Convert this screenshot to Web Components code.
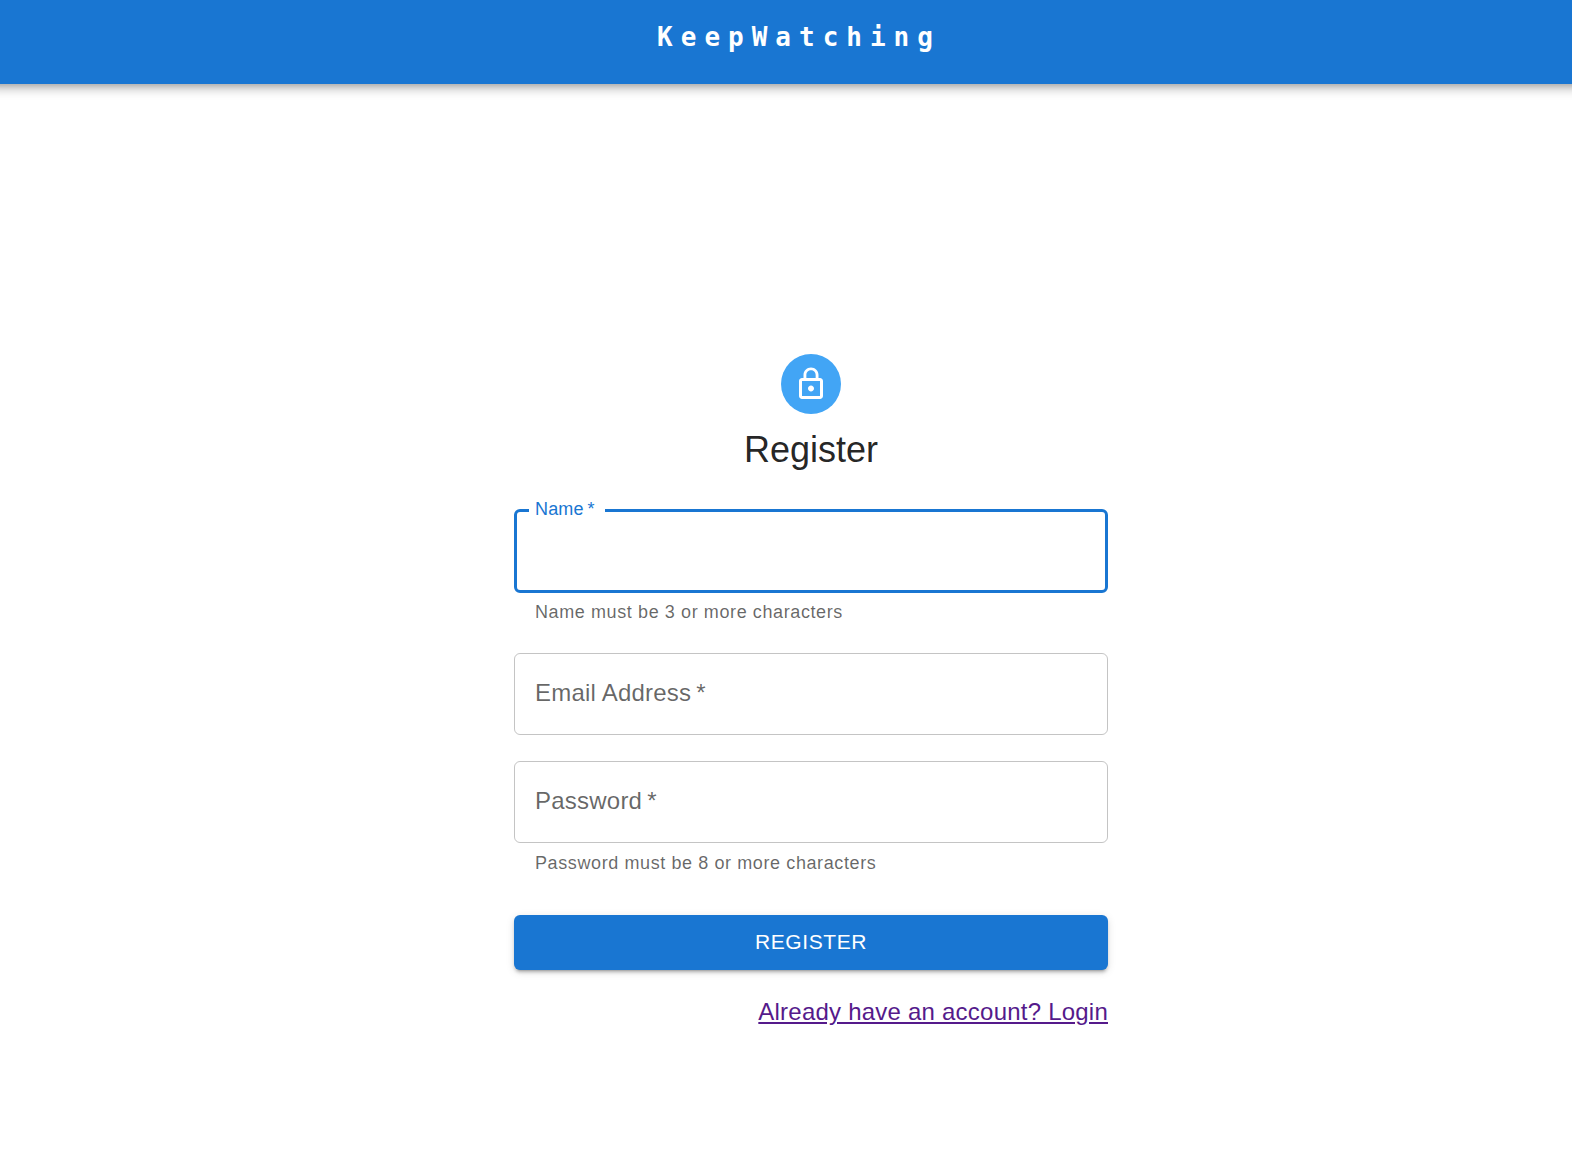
<!DOCTYPE html>
<html lang="en">
<head>
<meta charset="utf-8">
<meta name="viewport" content="width=device-width, initial-scale=1">
<title>KeepWatching</title>
<style>
  :root {
    --primary: #1976d2;
    --primary-light: #42a5f5;
    --text: rgba(0, 0, 0, 0.87);
    --text-muted: rgba(0, 0, 0, 0.6);
    --outline: rgba(0, 0, 0, 0.23);
  }
  body {
    margin: 0;
    background: #fff;
    color: var(--text);
    font-family: "Liberation Sans", Arial, sans-serif;
    font-size: 24px;
    line-height: 32px;
  }
</style>
</head>
<body>
<kw-app-bar>KeepWatching</kw-app-bar>
<kw-register-page></kw-register-page>

<script>
class KwElement extends HTMLElement {
  constructor() {
    super();
    this.attachShadow({ mode: "open" });
  }
  connectedCallback() {
    this.shadowRoot.innerHTML =
      "<style>*{box-sizing:border-box}" + this.constructor.css + "</style>" + this.render();
  }
}

class KwAppBar extends KwElement {
  static css = `
    :host { display: block; }
    header {
      display: flex;
      justify-content: center;
      height: 84px;
      padding: 13px 0 0 26px;
      background: var(--primary);
      color: #fff;
      box-shadow: 0 -5px 6px 6px rgba(0,0,0,.2), 0 -2px 8px 8px rgba(0,0,0,.14), 0 -13px 15px 15px rgba(0,0,0,.12);
    }
    .brand {
      font: 700 26px/48px "DejaVu Sans Mono", monospace;
      letter-spacing: 8px;
    }
  `;
  render() {
    return `<header><div class="brand"><slot></slot></div></header>`;
  }
}

class KwLockAvatar extends KwElement {
  static css = `
    :host {
      display: flex;
      align-items: center;
      justify-content: center;
      width: 60px;
      height: 60px;
      border-radius: 50%;
      background: var(--primary-light);
    }
    svg { width: 36px; height: 36px; fill: #fff; }
  `;
  render() {
    return `<svg viewBox="0 0 24 24" aria-hidden="true"><path d="M12 17c1.100 0 2-.9 2-2s-.9-2-2-2-2 .9-2 2 .9 2 2 2m6-9h-1V6c0-2.760-2.240-5-5-5S7 3.240 7 6v2H6c-1.100 0-2 .9-2 2v10c0 1.100.9 2 2 2h12c1.100 0 2-.9 2-2V10c0-1.100-.9-2-2-2M8.900 6c0-1.710 1.390-3.100 3.100-3.100s3.100 1.390 3.100 3.100v2H8.900zM18 20H6V10h12z"/></svg>`;
  }
}

class KwTextField extends KwElement {
  static css = `
    :host { display: flex; flex-direction: column; }
    .control { display: grid; height: 82px; }
    .outline, input, label { grid-area: 1 / 1; }
    .outline {
      border: 1px solid var(--outline);
      border-radius: 6px;
      pointer-events: none;
    }
    input {
      width: 100%;
      padding: 24px 21px;
      border: 0;
      outline: 0;
      background: none;
      color: var(--text);
      font: inherit;
    }
    label {
      align-self: start;
      justify-self: start;
      margin: 23px 0 0 15px;
      padding: 0 6px;
      color: var(--text-muted);
      line-height: 34px;
      letter-spacing: 0.00938em;
      pointer-events: none;
    }
    :host([active]) .outline {
      margin: -1px 0;
      border: 3px solid var(--primary);
    }
    :host([active]) label {
      margin-top: -13px;
      padding-right: 10px;
      background: #fff;
      color: var(--primary);
      font-size: 18px;
      line-height: 24px;
    }
    p {
      margin: 5px 21px 0;
      color: var(--text-muted);
      font-size: 18px;
      line-height: 30px;
      letter-spacing: 0.03333em;
    }
  `;
  render() {
    const label = this.getAttribute("label");
    const type = this.getAttribute("type") || "text";
    const hint = this.getAttribute("hint");
    return `
      <div class="control">
        <div class="outline"></div>
        <input id="field" type="${type}" required>
        <label for="field">${label}&thinsp;*</label>
      </div>
      ${hint ? `<p>${hint}</p>` : ""}`;
  }
}

class KwButton extends KwElement {
  static css = `
    :host { display: block; }
    button {
      display: block;
      width: 100%;
      height: 55px;
      padding: 0 24px 2px;
      border: 0;
      border-radius: 6px;
      background: var(--primary);
      color: #fff;
      font: inherit;
      font-size: 21px;
      line-height: 36px;
      letter-spacing: 0.02857em;
      text-transform: uppercase;
      cursor: pointer;
      box-shadow: 0 4px 2px -3px rgba(0,0,0,.2), 0 3px 3px 0 rgba(0,0,0,.14), 0 2px 8px 0 rgba(0,0,0,.12);
    }
  `;
  render() {
    return `<button type="submit"><slot></slot></button>`;
  }
}

class KwRegisterPage extends KwElement {
  static css = `
    :host { display: block; }
    main {
      display: flex;
      flex-direction: column;
      align-items: center;
      padding: 270px 0 48px 50px;
    }
    h1 {
      margin: 12px 0 36px;
      font-size: 36px;
      font-weight: 400;
      line-height: 48px;
    }
    form {
      display: flex;
      flex-direction: column;
      gap: 26px;
      width: 100%;
      max-width: 594px;
    }
    .submit { margin-top: 11px; }
    a {
      align-self: flex-end;
      color: #551a8b;
      letter-spacing: 0.00938em;
    }
  `;
  render() {
    return `
      <main>
        <kw-lock-avatar></kw-lock-avatar>
        <h1>Register</h1>
        <form>
          <kw-text-field label="Name" hint="Name must be 3 or more characters" active></kw-text-field>
          <kw-text-field label="Email Address" type="email"></kw-text-field>
          <kw-text-field label="Password" type="password" hint="Password must be 8 or more characters"></kw-text-field>
          <kw-button class="submit">Register</kw-button>
          <a href="#login">Already have an account? Login</a>
        </form>
      </main>`;
  }
}

customElements.define("kw-app-bar", KwAppBar);
customElements.define("kw-lock-avatar", KwLockAvatar);
customElements.define("kw-text-field", KwTextField);
customElements.define("kw-button", KwButton);
customElements.define("kw-register-page", KwRegisterPage);
</script>
</body>
</html>
